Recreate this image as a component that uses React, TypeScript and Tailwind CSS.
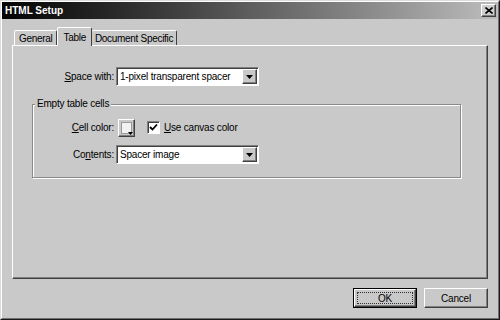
import React from "react";

const raised =
  "border border-t-white border-l-white border-r-[#404040] border-b-[#404040] shadow-[inset_-1px_-1px_0_#808080]";
const sunken =
  "border border-t-[#808080] border-l-[#808080] border-r-white border-b-white shadow-[inset_1px_1px_0_#404040]";

const Arrow = () => (
  <div className={`flex w-[15px] h-full items-center justify-center bg-[#c9c9c9] ${raised}`}>
    <svg width="7" height="4" viewBox="0 0 7 4">
      <path d="M0 0h7L3.5 4z" fill="#000" />
    </svg>
  </div>
);

const Select = ({ value }: { value: string }) => (
  <div className={`flex h-[19px] w-[143px] items-stretch bg-white ${sunken}`}>
    <div className="flex flex-1 items-center pl-[3px]">{value}</div>
    <div className="p-px pl-0">
      <Arrow />
    </div>
  </div>
);

const App = () => {
  return (
    <div className="h-[320px] w-[500px] border border-t-[#dcdcdc] border-l-[#dcdcdc] border-r-[#1a1a1a] border-b-[#1a1a1a] bg-[#c9c9c9] font-['Liberation_Sans',Arial,sans-serif] text-[10px] tracking-[-0.2px] text-black">
      <div className="flex h-full flex-col border border-t-white border-l-white border-r-[#707070] border-b-[#707070]">
        {/* title bar */}
        <div className="flex h-[17px] items-center justify-between bg-gradient-to-r from-[#050505] via-[#5e5e5e] to-[#bdbdbd] pl-[3px] pr-[2px]">
          <span className="font-bold tracking-normal text-white">HTML Setup</span>
          <div className={`flex h-[13px] w-[15px] items-center justify-center bg-[#cfcfcf] ${raised}`}>
            <svg width="8" height="7" viewBox="0 0 8 7">
              <path d="M0.5 0.5l7 6M7.5 0.5l-7 6" stroke="#000" strokeWidth="1.6" />
            </svg>
          </div>
        </div>

        {/* tabs */}
        <div className="mx-[10px] mt-[8px] flex h-[18px] items-end whitespace-nowrap pl-[2px] tracking-[-0.3px]">
          <div className="flex h-[15px] items-center rounded-t-[2px] border-t border-l border-r border-t-white border-l-white border-r-[#404040] px-[4px]">
            General
          </div>
          <div className="relative z-10 -mb-px flex h-[19px] items-start rounded-t-[2px] border-t border-l border-r border-t-white border-l-white border-r-[#404040] bg-[#c9c9c9] px-[5px] pt-[2px]">
            Table
          </div>
          <div className="flex h-[15px] items-center rounded-t-[2px] border-t border-r border-t-white border-r-[#404040] px-[3px]">
            Document Specific
          </div>
        </div>

        {/* panel */}
        <div className="mx-[10px] h-[234px] border border-t-white border-l-white border-r-[#404040] border-b-[#404040] shadow-[inset_-1px_-1px_0_#808080] pt-[21px]">
          <div className="flex items-center">
            <div className="w-[103px] pr-[2px] text-right">
              <span className="underline">S</span>pace with:
            </div>
            <Select value="1-pixel transparent spacer" />
          </div>

          <fieldset className="ml-[19px] mt-[12px] w-[429px] border border-[#8a8a8a] pb-[13px] pt-[8px] shadow-[inset_1px_1px_0_#fff,1px_1px_0_#fff]">
            <legend className="ml-[2px] bg-[#c9c9c9] px-[2px] leading-[12px]">Empty table cells</legend>
            <div className="flex h-[19px] items-center">
              <div className="w-[83px] pr-[2px] text-right">
                <span className="underline">C</span>ell color:
              </div>
              <div className={`relative ml-[2px] h-[18px] w-[17px] bg-[#c9c9c9] ${raised} p-[2px]`}>
                <div className="h-full w-full border border-[#9a9a9a] bg-[#f2f2f2]" />
                <svg className="absolute bottom-[1px] right-[1px]" width="5" height="3" viewBox="0 0 5 3">
                  <path d="M0 0h5L2.5 3z" fill="#000" />
                </svg>
              </div>
              <div className={`ml-[12px] flex h-[13px] w-[13px] items-center justify-center bg-white ${sunken}`}>
                <svg width="9" height="9" viewBox="0 0 9 9">
                  <path d="M1 4l2.5 2.5L8 1.5" stroke="#000" strokeWidth="1.8" fill="none" />
                </svg>
              </div>
              <div className="ml-[4px]">
                <span className="underline">U</span>se canvas color
              </div>
            </div>
            <div className="mt-[8px] flex items-center">
              <div className="w-[83px] pr-[2px] text-right">
                Co<span className="underline">n</span>tents:
              </div>
              <Select value="Spacer image" />
            </div>
          </fieldset>
        </div>

        {/* buttons */}
        <div className="mt-[9px] flex justify-end gap-[7px] pr-[10px]">
          <div className="h-[20px] w-[64px] border border-black">
            <div className={`flex h-full w-full items-center justify-center p-[2px] bg-[#c9c9c9] ${raised}`}>
              <div className="flex h-full w-full items-center justify-center border border-dotted border-[#303030]">
                OK
              </div>
            </div>
          </div>
          <div className={`flex h-[20px] w-[64px] items-center justify-center bg-[#c9c9c9] ${raised}`}>
            Cancel
          </div>
        </div>
      </div>
    </div>
  );
};

export default App;
